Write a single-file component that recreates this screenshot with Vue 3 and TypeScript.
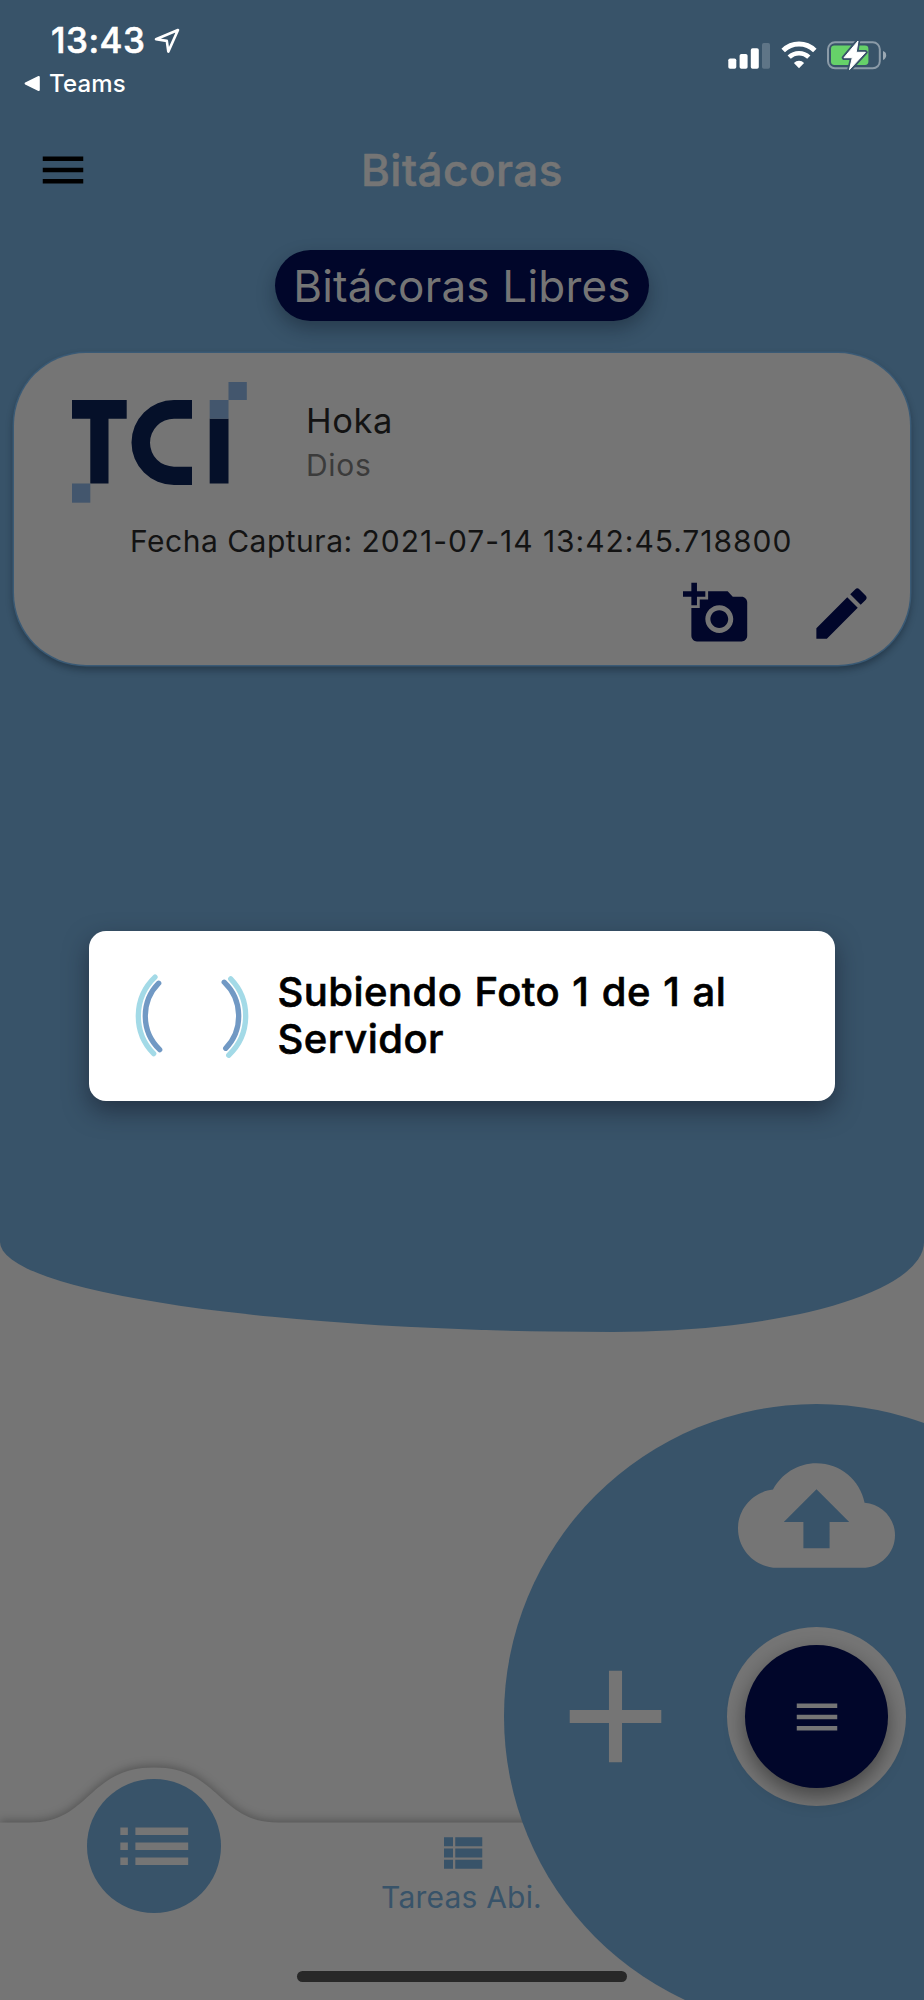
<script setup lang="ts">
interface LogEntry {
  name: string
  role: string
  captured: string
}

const entry: LogEntry = {
  name: 'Hoka',
  role: 'Dios',
  captured: '2021-07-14 13:42:45.718800',
}
const current = 1
const total = 1
</script>

<template>
  <div class="screen">
    <section class="hero">
      <header class="status">
        <div class="status-left">
          <div class="clock">
            <span class="time">13:43</span>
            <svg class="location" width="26" height="26" viewBox="0 0 26 26">
              <path d="M2 11.3 L24 2 L14.3 23.6 L12.8 12.9 Z" fill="none" stroke="#fff" stroke-width="2.6" stroke-linejoin="round" />
            </svg>
          </div>
          <div class="back">
            <svg width="17" height="17" viewBox="0 0 17 17"><path d="M1.6 8.5 L14.8 2 V15 Z" fill="#fff" stroke="#fff" stroke-width="2" stroke-linejoin="round" /></svg>
            <span class="back-label">Teams</span>
          </div>
        </div>
        <div class="status-right">
          <svg class="signal" width="42" height="27" viewBox="0 0 42 27" fill="#fff">
            <rect x="0.3" y="16.5" width="8" height="10.2" rx="1.8" />
            <rect x="11.6" y="12" width="8" height="14.7" rx="1.8" />
            <rect x="22.8" y="6.3" width="8" height="20.4" rx="1.8" />
            <rect x="34" y="1" width="8" height="25.7" rx="1.8" opacity="0.2" />
          </svg>
          <svg class="wifi" width="36" height="28" viewBox="0 0 36 28">
            <path d="M2.2 9.5 A22.4 22.4 0 0 1 33.8 9.5" fill="none" stroke="#fff" stroke-width="5" />
            <path d="M8.2 16.2 A14 14 0 0 1 27.8 16.2" fill="none" stroke="#fff" stroke-width="4.6" />
            <path d="M12.9 21.9 A7.4 7.4 0 0 1 23.1 21.9 L18 27.2 Z" fill="#fff" />
          </svg>
          <svg class="battery" width="60" height="32" viewBox="0 0 60 32">
            <rect x="1" y="3.3" width="51.8" height="26" rx="7" fill="none" stroke="#fff" stroke-opacity="0.42" stroke-width="2" />
            <path d="M56 12 Q59.2 13 59.2 16.3 Q59.2 19.6 56 21 Z" fill="#fff" fill-opacity="0.5" />
            <rect x="4" y="6.5" width="37.4" height="19.4" rx="3.4" fill="#66d169" />
            <path d="M31 2 L17 18.7 H25.3 L22.5 30.6 L38.4 13.3 H29.2 Z" fill="#fff" stroke="#385369" stroke-width="4.5" stroke-linejoin="round" />
            <path d="M31 2 L17 18.7 H25.3 L22.5 30.6 L38.4 13.3 H29.2 Z" fill="#fff" stroke="#fff" stroke-width="1" stroke-linejoin="round" />
          </svg>
        </div>
      </header>

      <div class="appbar">
        <svg class="menu" width="54" height="54" viewBox="0 0 24 24"><path d="M3 18h18v-2H3v2zm0-5h18v-2H3v2zm0-7v2h18V6H3z" /></svg>
        <h1 class="title">Bitácoras</h1>
      </div>

      <div class="pill"><span class="pill-text">Bitácoras Libres</span></div>

      <article class="card">
        <div class="card-top">
          <svg class="logo" width="175" height="121" viewBox="0 0 175 121">
            <g fill="#051029">
              <path d="M0 18H54.7V36.7H36.5V101.5H18.3V36.7H0Z" />
              <path d="M120 18H102A42.5 42.5 0 0 0 102 103H120V84.7H102A24 24 0 0 1 102 36.7H120Z" />
              <rect x="137.7" y="36.7" width="18.8" height="64.8" />
            </g>
            <g fill="#43566d">
              <rect x="0" y="101.5" width="18.3" height="19.2" />
              <rect x="137.7" y="18" width="18.8" height="18.7" />
              <rect x="156.5" y="0" width="18.3" height="18" />
            </g>
          </svg>
          <div class="person">
            <div class="name">{{ entry.name }}</div>
            <div class="role">{{ entry.role }}</div>
          </div>
        </div>
        <div class="captured">Fecha Captura: <span class="stamp">{{ entry.captured }}</span></div>
        <div class="actions">
          <svg width="67" height="67" viewBox="0 0 24 24"><path d="M3 4V1h2v3h3v2H5v3H3V6H0V4h3zm3 6V7h3V4h7l1.83 2H21c1.1 0 2 .9 2 2v12c0 1.1-.9 2-2 2H5c-1.1 0-2-.9-2-2V10h3zm7 9c2.76 0 5-2.24 5-5s-2.24-5-5-5-5 2.24-5 5 2.24 5 5 5zm-3.2-5c0 1.77 1.43 3.2 3.2 3.2s3.2-1.43 3.2-3.2-1.43-3.2-3.2-3.2-3.2 1.43-3.2 3.2z" /></svg>
          <svg width="67" height="67" viewBox="0 0 24 24"><path d="M3 17.25V21h3.75L17.81 9.94l-3.75-3.75L3 17.25zM20.71 7.04c.39-.39.39-1.02 0-1.41l-2.34-2.34c-.39-.39-1.02-.39-1.41 0l-1.83 1.83 3.75 3.75 1.83-1.83z" /></svg>
        </div>
      </article>
    </section>

    <nav class="tabs">
      <svg class="tabs-shape" width="924" height="260" viewBox="0 0 924 260">
        <path d="M0 82.5 H30 C90 82.5 88 27.5 154 27.5 C220 27.5 218 82.5 278 82.5 H924 V270 H0 Z" fill="#757575" />
      </svg>
      <div class="tab-active">
        <svg width="90.5" height="90.5" viewBox="0 0 24 24"><path fill="#757575" d="M3 13h2v-2H3v2zm0 4h2v-2H3v2zm0-8h2V7H3v2zm4 4h14v-2H7v2zm0 4h14v-2H7v2zM7 7v2h14V7H7z" /></svg>
      </div>
      <div class="tab">
        <svg width="54" height="54" viewBox="0 0 24 24"><path fill="#385369" d="M4 14h4v-4H4v4zm0 5h4v-4H4v4zM4 9h4V5H4v4zm5 5h12v-4H9v4zm0 5h12v-4H9v4zM9 5v4h12V5H9z" /></svg>
        <span class="tab-label">Tareas Abi.</span>
      </div>
    </nav>

    <div class="radial">
      <svg class="upload" width="157" height="157" viewBox="0 0 24 24"><path d="M19.35 10.04C18.67 6.59 15.64 4 12 4 9.11 4 6.6 5.64 5.35 8.04 2.34 8.36 0 10.91 0 14c0 3.31 2.69 6 6 6h13c2.76 0 5-2.24 5-5 0-2.64-2.05-4.78-4.65-4.96zM14 13v4h-4v-4H7l5-5 5 5h-3z" /></svg>
      <svg class="add" width="157" height="157" viewBox="0 0 24 24"><path d="M19 13h-6v6h-2v-6H5v-2h6V5h2v6h6v2z" /></svg>
      <div class="ring">
        <div class="knob">
          <svg width="54" height="54" viewBox="0 0 24 24"><path fill="#757575" d="M3 18h18v-2H3v2zm0-5h18v-2H3v2zm0-7v2h18V6H3z" /></svg>
        </div>
      </div>
    </div>

    <div class="home-indicator"></div>

    <div class="dialog">
      <svg class="spinner" width="114" height="114" viewBox="-57 -57 114 114" fill="none" stroke-width="5.3" stroke-linecap="round">
        <g stroke="#a3dae7">
          <path d="M-37 -38.9 A53.7 53.7 0 0 0 -38.3 37.6" />
          <path d="M38.7 -37.2 A53.7 53.7 0 0 1 36.7 39.2" />
        </g>
        <g stroke="#7199c4">
          <path d="M-33.3 -32.8 A46.7 46.7 0 0 0 -32.3 33.7" />
          <path d="M32.2 -33.8 A46.7 46.7 0 0 1 33.7 32.3" />
        </g>
      </svg>
      <p class="dialog-text">Subiendo Foto {{ current }} de {{ total }} al Servidor</p>
    </div>
  </div>
</template>

<style>
html,
body {
  margin: 0;
  background: #757575;
}
</style>

<style scoped>
.screen {
  position: relative;
  width: 924px;
  height: 2000px;
  overflow: hidden;
  background: #757575;
  font-family: Inter, "Liberation Sans", sans-serif;
  display: flex;
  flex-direction: column;
  justify-content: space-between;
}
.hero {
  height: 1332px;
  background: #385369;
  border-radius: 0 0 311px 613px / 0 0 90px 90px;
  display: flex;
  flex-direction: column;
}
.status {
  height: 120px;
  box-sizing: border-box;
  padding: 18px 37px 0 24px;
  display: flex;
  justify-content: space-between;
  color: #fff;
}
.clock {
  display: flex;
  padding-left: 27px;
  height: 44px;
}
.time {
  width: 103px;
  font-size: 35px;
  line-height: 44px;
  font-weight: 500;
  letter-spacing: 0.5px;
  -webkit-text-stroke: 0.6px currentColor;
}
.location {
  margin-top: 10px;
}
.back {
  display: flex;
  align-items: center;
  gap: 8px;
  margin-top: 6.5px;
  height: 30px;
}
.back-label {
  font-size: 24px;
  line-height: 30px;
  font-weight: 500;
  letter-spacing: 0.15px;
}
.status-right {
  display: flex;
  align-items: flex-start;
  padding-top: 20px;
}
.signal {
  margin-top: 4px;
  margin-right: 10.5px;
}
.wifi {
  margin-top: 3px;
  margin-right: 10.5px;
}
.battery {
  margin-top: 1px;
}
.appbar {
  height: 99px;
  display: grid;
  grid-template-columns: 100px 1fr 100px;
  align-items: center;
}
.menu {
  margin-left: 35.5px;
}
.title {
  margin: 0;
  text-align: center;
  font-size: 44px;
  line-height: 60px;
  font-weight: 500;
  letter-spacing: 0.5px;
  -webkit-text-stroke: 0.6px currentColor;
  color: #757575;
}
.pill {
  align-self: center;
  margin-top: 31px;
  width: 374px;
  height: 71px;
  border-radius: 36px;
  background: #01062a;
  box-shadow: 0 8px 18px rgba(10, 20, 30, 0.36);
  display: flex;
  align-items: center;
  justify-content: center;
}
.pill-text {
  font-size: 44px;
  line-height: 60px;
  letter-spacing: 0.2px;
  color: #757575;
  white-space: nowrap;
}
.card {
  margin: 32px 14px 0;
  height: 312px;
  box-sizing: border-box;
  padding: 29px 35px 0 58px;
  border-radius: 72px;
  background: #757575;
  box-shadow: 0 0 0 1.5px #3a5a75, 0 4px 7px 1px rgba(10, 20, 30, 0.4);
}
.card-top {
  display: flex;
  gap: 59px;
  height: 121px;
}
.person {
  padding-top: 17px;
}
.name {
  font-size: 34.5px;
  line-height: 44px;
  letter-spacing: 0.6px;
  color: #131313;
}
.role {
  font-size: 30px;
  line-height: 45px;
  letter-spacing: 0.7px;
  color: #3b3b3b;
}
.captured {
  margin-top: 18px;
  margin-left: 58px;
  font-size: 30px;
  line-height: 40px;
  letter-spacing: 0.5px;
  white-space: nowrap;
  color: #131313;
}
.stamp {
  letter-spacing: 0.97px;
}
.actions {
  margin-top: 19px;
  display: flex;
  justify-content: flex-end;
  gap: 58px;
  fill: #01062a;
}
.tabs {
  height: 260px;
  display: grid;
  grid-template-columns: 308px 308px 1fr;
  justify-items: center;
  align-items: start;
}
.tabs-shape {
  position: absolute;
  left: 0;
  bottom: 0;
  filter: drop-shadow(0 -2px 4px rgba(0, 0, 0, 0.28));
}
.tab-active {
  position: relative;
  margin-top: 39px;
  width: 134px;
  height: 134px;
  border-radius: 50%;
  background: #385369;
  display: flex;
  align-items: center;
  justify-content: center;
}
.tab {
  position: relative;
  padding-top: 85.5px;
  display: flex;
  flex-direction: column;
  align-items: center;
}
.tab-label {
  margin-top: -2.5px;
  margin-right: 1px;
  font-size: 30px;
  line-height: 40px;
  letter-spacing: 0.2px;
  color: #385369;
  white-space: nowrap;
}
.radial {
  position: absolute;
  left: 504px;
  top: 1404px;
  width: 625px;
  height: 625px;
  border-radius: 50%;
  background: #385369;
  fill: #757575;
}
.upload {
  position: absolute;
  left: 234.2px;
  top: 33px;
}
.add {
  position: absolute;
  left: 33.4px;
  top: 234px;
}
.ring {
  position: absolute;
  left: 223px;
  top: 223px;
  width: 179px;
  height: 179px;
  border-radius: 50%;
  background: #757575;
  display: flex;
  align-items: center;
  justify-content: center;
}
.knob {
  width: 143px;
  height: 143px;
  border-radius: 50%;
  background: #01062a;
  box-shadow: 0 8px 20px rgba(0, 0, 0, 0.42);
  display: flex;
  align-items: center;
  justify-content: center;
}
.home-indicator {
  position: absolute;
  left: 297px;
  top: 1971px;
  width: 330px;
  height: 11px;
  border-radius: 6px;
  background: #282828;
}
.dialog {
  position: absolute;
  left: 89.4px;
  top: 931px;
  width: 745.2px;
  height: 169.5px;
  box-sizing: border-box;
  padding-left: 45.6px;
  border-radius: 17px;
  background: #fff;
  box-shadow: 0 10px 24px rgba(20, 25, 40, 0.55);
  display: flex;
  align-items: center;
}
.dialog-text {
  margin: 0 0 0 28.5px;
  width: 480px;
  font-size: 40px;
  line-height: 46.7px;
  font-weight: 500;
  letter-spacing: 0.45px;
  word-spacing: 1.2px;
  -webkit-text-stroke: 0.6px currentColor;
  color: #000;
}
</style>
